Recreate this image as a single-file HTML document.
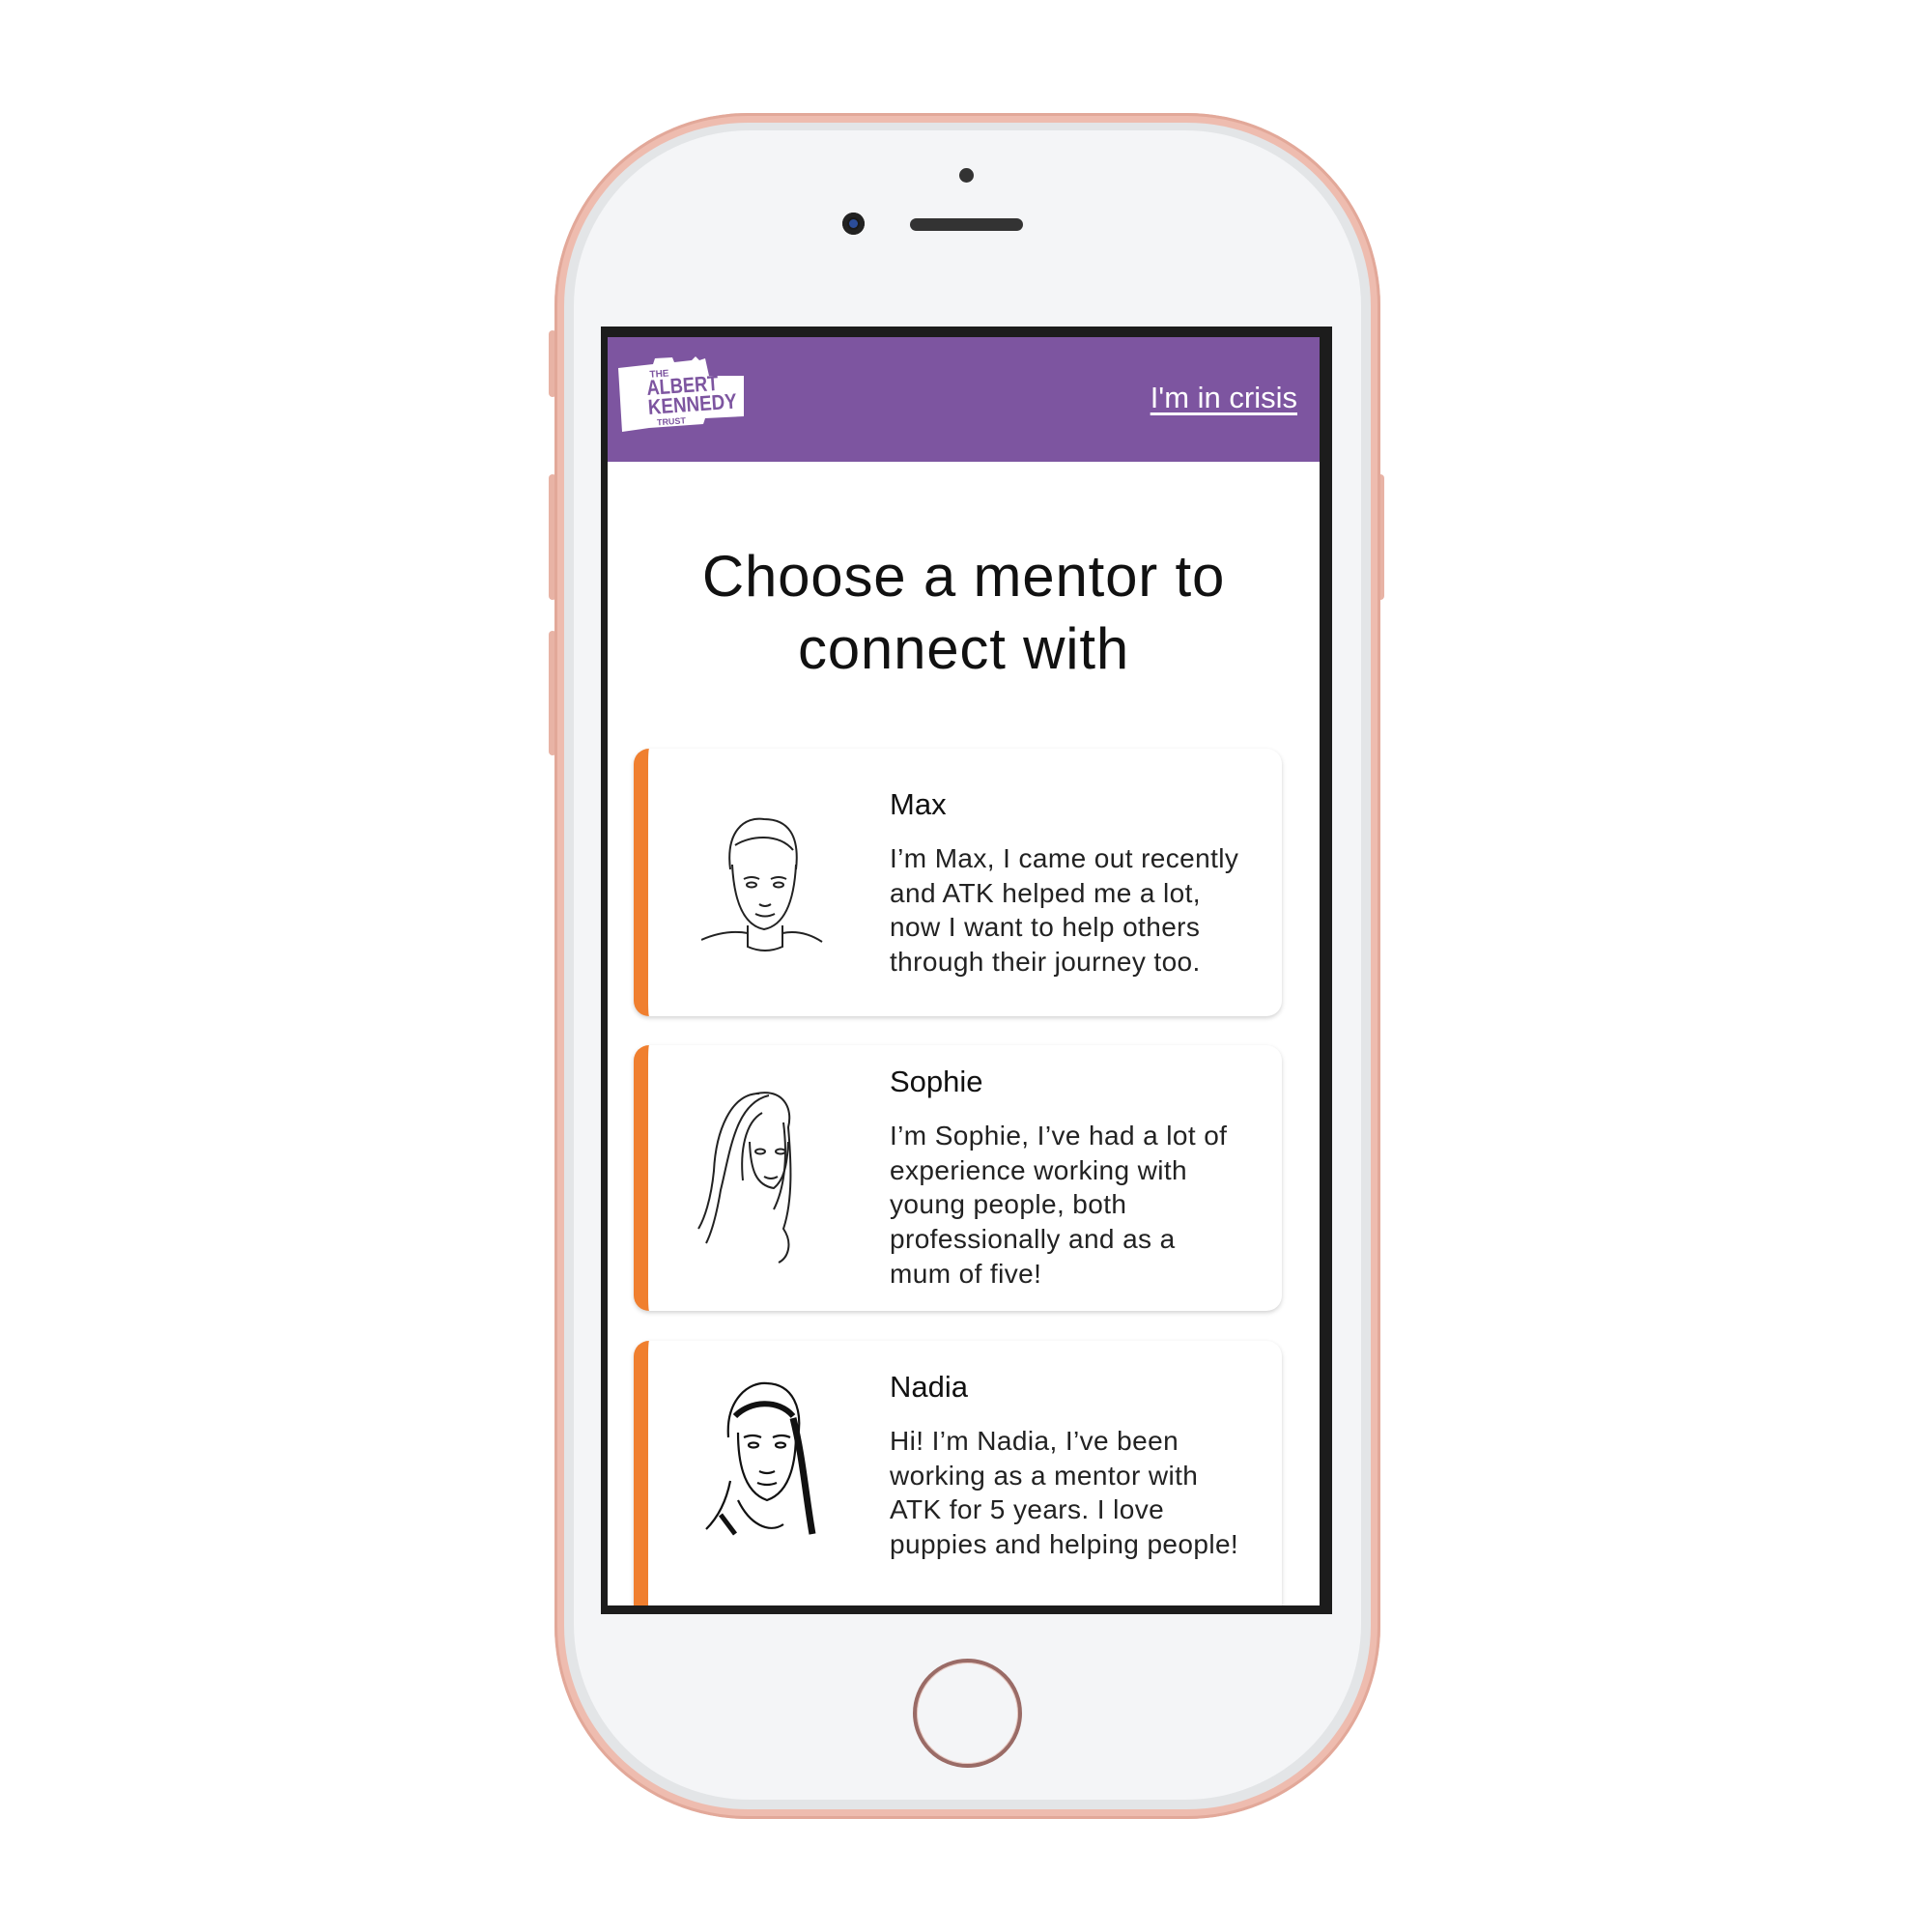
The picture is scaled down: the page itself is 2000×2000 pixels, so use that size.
<!DOCTYPE html>
<html><head><meta charset="utf-8"><style>
*{margin:0;padding:0;box-sizing:border-box}
html,body{width:2000px;height:2000px;background:#fff;overflow:hidden;position:relative;font-family:"Liberation Sans",sans-serif}
.abs{position:absolute}
.phone{left:574px;top:117px;width:855px;height:1766px;border-radius:200px;background:#eebcaf;box-shadow:inset 0 0 0 3px #e2a899}
.face{left:584px;top:127px;width:835px;height:1746px;border-radius:190px;background:#e3e5e7}
.face2{left:594px;top:135px;width:815px;height:1728px;border-radius:182px;background:#f4f5f7}
.btn{background:#e8b3a5;border-radius:4px;width:8px}
.screen{left:622px;top:338px;width:757px;height:1333px;background:#1c1c1c}
.content{left:629px;top:349px;width:737px;height:1313px;background:#fff;overflow:hidden}
.hdr{left:0;top:0;width:737px;height:129px;background:#7d55a0}
.crisis{right:23px;top:45px;color:#fff;font-size:31px;text-decoration:underline;text-underline-offset:5px}
.title{left:0;width:737px;top:210px;text-align:center;font-size:60px;letter-spacing:0.8px;line-height:75px;color:#111}
.card{left:27px;width:671px;background:#fff;border-radius:16px;border-left:15px solid #f07f2f;box-shadow:0 2px 5px rgba(0,0,0,.18)}
.name{left:250px;font-size:31px;color:#111}
.txt{left:250px;font-size:28px;letter-spacing:0.4px;line-height:35.7px;color:#222;white-space:nowrap}
</style></head><body>
<div class="abs btn" style="left:568px;top:342px;height:69px"></div>
<div class="abs btn" style="left:568px;top:491px;height:130px"></div>
<div class="abs btn" style="left:568px;top:653px;height:129px"></div>
<div class="abs btn" style="left:1425px;top:491px;height:130px"></div>
<div class="abs phone"></div>
<div class="abs face"></div>
<div class="abs face2"></div>
<div class="abs" style="left:993px;top:174px;width:15px;height:15px;border-radius:50%;background:#333"></div>
<div class="abs" style="left:872px;top:220px;width:23px;height:23px;border-radius:50%;background:#1a1a1a;box-shadow:inset 0 0 0 5px #222"><div class="abs" style="left:7px;top:7px;width:9px;height:9px;border-radius:50%;background:#2b4d9a"></div></div>
<div class="abs" style="left:942px;top:226px;width:117px;height:13px;border-radius:7px;background:#333"></div>
<div class="abs" style="left:945px;top:1717px;width:113px;height:113px;border-radius:50%;border:4px solid #9a6b66;box-shadow:inset 0 0 0 1px #e8c8c0"></div>
<div class="abs screen"></div>
<div class="abs content">
 <div class="abs hdr">
  <svg class="abs" style="left:7px;top:18px" width="140" height="82" viewBox="0 0 140 82">
   <polygon points="4,14 40,10 42,4 60,3 62,8 80,6 84,2 88,6 94,4 98,22 134,22 134,64 94,66 92,72 36,76 8,80" fill="#fff"/>
   <g transform="rotate(-4 34 42)" font-family="Liberation Sans Narrow,Liberation Sans" font-weight="bold" fill="#7d55a0">
   <text x="38" y="24" font-size="10">THE</text>
   <text x="34" y="42" font-size="22" textLength="74" lengthAdjust="spacingAndGlyphs">ALBERT</text>
   <text x="34" y="62" font-size="22" textLength="92" lengthAdjust="spacingAndGlyphs">KENNEDY</text>
   <text x="42" y="74" font-size="9">TRUST</text>
   </g>
  </svg>
  <div class="abs crisis">I'm in crisis</div>
 </div>
 <div class="abs title">Choose a mentor to<br>connect with</div>

 <div class="abs card" style="top:426px;height:277px">
  <svg class="abs" style="left:55px;top:65px" width="130" height="150" viewBox="0 0 130 150" fill="none" stroke="#222" stroke-width="2">
   <path d="M30,60 C25,20 45,5 65,8 C90,8 102,25 98,60"/>
   <path d="M35,35 C50,25 80,22 95,40"/>
   <path d="M32,55 C34,95 45,118 65,122 C85,118 96,95 98,55"/>
   <path d="M44,70 q8,-4 16,0 M72,70 q8,-4 16,0"/>
   <ellipse cx="52" cy="76" rx="5" ry="2.5"/><ellipse cx="80" cy="76" rx="5" ry="2.5"/>
   <path d="M60,96 q6,4 12,0 M56,106 q10,5 20,0"/>
   <path d="M48,118 L48,140 Q66,148 84,140 L84,118"/>
   <path d="M0,133 Q25,122 48,126 M84,126 Q105,122 125,135"/>
  </svg>
  <div class="abs name" style="top:40px">Max</div>
  <div class="abs txt" style="top:96px">I’m Max, I came out recently<br>and ATK helped me a lot,<br>now I want to help others<br>through their journey too.</div>
 </div>

 <div class="abs card" style="top:733px;height:275px">
  <svg class="abs" style="left:50px;top:40px" width="130" height="190" viewBox="0 0 130 190" fill="none" stroke="#222" stroke-width="2">
   <path d="M65,10 C35,10 20,50 18,90 C15,120 8,140 2,150"/>
   <path d="M75,12 C40,20 35,70 25,110 C20,140 15,155 10,165"/>
   <path d="M62,10 C90,5 100,25 95,45 C98,80 100,120 90,150 C100,165 95,180 85,185"/>
   <path d="M68,30 C50,40 45,70 48,100 M90,40 C95,80 90,110 80,130"/>
   <path d="M55,60 C56,90 62,105 80,108 C90,100 94,85 95,60"/>
   <ellipse cx="66" cy="70" rx="5" ry="2.5"/><ellipse cx="87" cy="70" rx="5" ry="2.5"/>
   <path d="M70,96 q7,4 14,0"/>
  </svg>
  <div class="abs name" style="top:20px">Sophie</div>
  <div class="abs txt" style="top:76px">I’m Sophie, I’ve had a lot of<br>experience working with<br>young people, both<br>professionally and as a<br>mum of five!</div>
 </div>

 <div class="abs card" style="top:1039px;height:300px">
  <svg class="abs" style="left:55px;top:40px" width="130" height="180" viewBox="0 0 130 180" fill="none" stroke="#111" stroke-width="2.2">
   <path d="M28,60 C25,20 50,2 68,4 C95,5 105,30 100,60"/>
   <path d="M35,38 C50,22 80,20 95,38" stroke-width="6"/>
   <path d="M38,55 C38,95 48,118 68,125 C88,118 98,95 98,55"/>
   <path d="M44,60 q9,-4 18,0 M74,60 q9,-4 18,0"/>
   <ellipse cx="54" cy="68" rx="5" ry="2.5"/><ellipse cx="82" cy="68" rx="5" ry="2.5"/>
   <path d="M60,95 q8,4 16,0 M58,107 q10,4 20,0"/>
   <path d="M95,40 C105,80 108,120 115,160" stroke-width="7"/>
   <path d="M30,105 C25,130 15,145 5,155 M38,125 C50,150 70,160 85,150"/>
   <path d="M20,140 L35,160" stroke-width="5"/>
  </svg>
  <div class="abs name" style="top:30px">Nadia</div>
  <div class="abs txt" style="top:86px">Hi! I’m Nadia, I’ve been<br>working as a mentor with<br>ATK for 5 years. I love<br>puppies and helping people!</div>
 </div>
</div>
</body></html>
